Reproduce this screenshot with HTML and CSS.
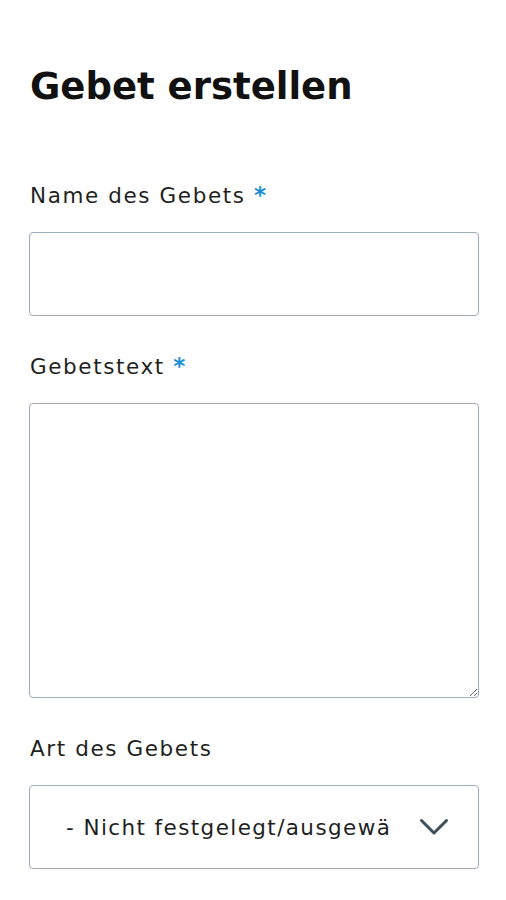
FILE: index.html
```html
<!DOCTYPE html>
<html lang="de">
<head>
<meta charset="utf-8">
<title>Gebet erstellen</title>
<link rel="stylesheet" href="styles.css">
</head>
<body>
<main class="page">
  <h1 class="title">Gebet erstellen</h1>
  <form class="form">
    <div class="field">
      <label class="label" for="name">Name des Gebets <span class="req">*</span></label>
      <input class="input" id="name" type="text">
    </div>
    <div class="field">
      <label class="label" for="text">Gebetstext <span class="req">*</span></label>
      <textarea class="textarea" id="text"></textarea>
    </div>
    <div class="field">
      <label class="label" for="art">Art des Gebets</label>
      <div class="select-wrap">
        <select class="select" id="art">
          <option>- Nicht festgelegt/ausgewählt -</option>
        </select>
        <svg class="chevron" width="30" height="20" viewBox="0 0 30 20" aria-hidden="true">
          <path d="M2.5 3.5 L15 16 L27.5 3.5" fill="none" stroke="#3d4e5d" stroke-width="3" stroke-linecap="round" stroke-linejoin="round"/>
        </svg>
      </div>
    </div>
  </form>
</main>
</body>
</html>
```

FILE: styles.css
```css
html, body {
  margin: 0;
  padding: 0;
  background: #ffffff;
}
body {
  font-family: "DejaVu Sans", "Noto Sans", sans-serif;
  color: #1a1a1a;
}
.page {
  padding: 65px 27px 0 29px;
}
.title {
  margin: 0 0 0 1px;
  font-size: 37px;
  line-height: 44px;
  font-weight: 700;
  color: #111111;
}
.form {
  display: flex;
  flex-direction: column;
  gap: 37px;
  margin-top: 73px;
}
.field {
  display: flex;
  flex-direction: column;
  gap: 22px;
}
.label {
  margin-left: 1px;
  font-size: 21.5px;
  line-height: 28px;
  height: 28px;
  color: #1f1f1f;
  letter-spacing: 1.6px;
}
.req {
  color: #1a8fd8;
  font-weight: 700;
  font-size: 23px;
  line-height: 0;
  letter-spacing: 0;
}
.input, .textarea, .select {
  box-sizing: border-box;
  width: 450px;
  margin: 0;
  border: 1.5px solid #9eabb8;
  border-radius: 4px;
  background: #ffffff;
  font-family: inherit;
  font-size: 21.5px;
  color: #1f1f1f;
}
.input {
  height: 84px;
}
.textarea {
  display: block;
  height: 295px;
}
.select-wrap {
  position: relative;
  width: 450px;
}
.select {
  display: block;
  height: 84px;
  appearance: none;
  -webkit-appearance: none;
  padding: 0 86px 0 36px;
  letter-spacing: 1.4px;
}
.chevron {
  position: absolute;
  right: 30px;
  top: 32px;
  pointer-events: none;
}
```
